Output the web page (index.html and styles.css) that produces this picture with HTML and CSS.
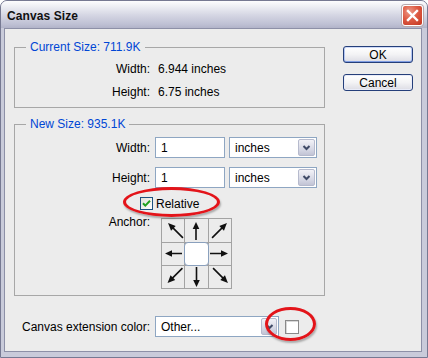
FILE: index.html
```html
<!DOCTYPE html>
<html>
<head>
<meta charset="utf-8">
<title>Canvas Size</title>
<link rel="stylesheet" href="styles.css">
</head>
<body>
<div class="window">
  <div class="titlebar">
    <span class="title">Canvas Size</span>
    <span class="close"><svg width="13" height="13" viewBox="0 0 13 13"><path d="M2 2 L11 11 M11 2 L2 11" stroke="#fff" stroke-width="2.4" stroke-linecap="square"/></svg></span>
  </div>
  <div class="client">
    <div class="main">
      <div class="groups">
        <fieldset class="group current">
          <legend>Current Size: 711.9K</legend>
          <div class="row"><span class="lbl">Width:</span><span class="val">6.944 inches</span></div>
          <div class="row"><span class="lbl">Height:</span><span class="val">6.75 inches</span></div>
        </fieldset>
        <fieldset class="group newsize">
          <legend>New Size: 935.1K</legend>
          <div class="frow">
            <span class="lbl">Width:</span>
            <span class="input">1</span>
            <span class="select unit"><span class="stext">inches</span><span class="dbtn"><svg width="11" height="11" viewBox="0 0 11 11"><path d="M2.5 4 L5.5 7 L8.5 4" fill="none" stroke="#3f4a66" stroke-width="2"/></svg></span></span>
          </div>
          <div class="frow second">
            <span class="lbl">Height:</span>
            <span class="input">1</span>
            <span class="select unit"><span class="stext">inches</span><span class="dbtn"><svg width="11" height="11" viewBox="0 0 11 11"><path d="M2.5 4 L5.5 7 L8.5 4" fill="none" stroke="#3f4a66" stroke-width="2"/></svg></span></span>
          </div>
          <div class="relrow">
            <span class="check"><svg width="11" height="11" viewBox="0 0 11 11"><path d="M2 5.2 L4.3 7.6 L9 2.8" fill="none" stroke="#21a121" stroke-width="2"/></svg></span>
            <span class="reltext">Relative</span>
          </div>
          <div class="anchorrow">
            <span class="lbl anchorlbl">Anchor:</span>
            <div class="grid">
              <div class="cell"><svg viewBox="0 0 22 23"><g transform="translate(13.5 11.5) rotate(-45)"><line x1="0" y1="10.5" x2="0" y2="-4" stroke="#111" stroke-width="1.6"/><polygon points="0,-10.5 -3.3,-3 3.3,-3" fill="#111"/></g></svg></div>
              <div class="cell"><svg viewBox="0 0 23 23"><g transform="translate(11 12) rotate(0)"><line x1="0" y1="9" x2="0" y2="-3" stroke="#111" stroke-width="1.6"/><polygon points="0,-9 -3.3,-2 3.3,-2" fill="#111"/></g></svg></div>
              <div class="cell"><svg viewBox="0 0 22 23"><g transform="translate(10.5 11.5) rotate(45)"><line x1="0" y1="10.5" x2="0" y2="-4" stroke="#111" stroke-width="1.6"/><polygon points="0,-10.5 -3.3,-3 3.3,-3" fill="#111"/></g></svg></div>
              <div class="cell"><svg viewBox="0 0 22 22"><g transform="translate(11.5 10.5) rotate(-90)"><line x1="0" y1="8.5" x2="0" y2="-3" stroke="#111" stroke-width="1.6"/><polygon points="0,-8.5 -3.3,-1.5 3.3,-1.5" fill="#111"/></g></svg></div>
              <div class="cell center"></div>
              <div class="cell"><svg viewBox="0 0 22 22"><g transform="translate(10 10.5) rotate(90)"><line x1="0" y1="9" x2="0" y2="-3" stroke="#111" stroke-width="1.6"/><polygon points="0,-9 -3.3,-2 3.3,-2" fill="#111"/></g></svg></div>
              <div class="cell"><svg viewBox="0 0 22 22"><g transform="translate(13 9.5) rotate(-135)"><line x1="0" y1="10.5" x2="0" y2="-4" stroke="#111" stroke-width="1.6"/><polygon points="0,-10.5 -3.3,-3 3.3,-3" fill="#111"/></g></svg></div>
              <div class="cell"><svg viewBox="0 0 23 22"><g transform="translate(11.5 11) rotate(180)"><line x1="0" y1="10" x2="0" y2="-3" stroke="#111" stroke-width="1.6"/><polygon points="0,-10 -3.3,-3 3.3,-3" fill="#111"/></g></svg></div>
              <div class="cell"><svg viewBox="0 0 22 22"><g transform="translate(11.5 9.5) rotate(135)"><line x1="0" y1="10.5" x2="0" y2="-4" stroke="#111" stroke-width="1.6"/><polygon points="0,-10.5 -3.3,-3 3.3,-3" fill="#111"/></g></svg></div>
            </div>
          </div>
        </fieldset>
      </div>
      <div class="buttons">
        <span class="btn default">OK</span>
        <span class="btn">Cancel</span>
      </div>
    </div>
    <div class="ext">
      <span class="extlbl">Canvas extension color:</span>
      <span class="select other"><span class="stext">Other...</span><span class="dbtn"><svg width="11" height="11" viewBox="0 0 11 11"><path d="M2.5 4 L5.5 7 L8.5 4" fill="none" stroke="#3f4a66" stroke-width="2"/></svg></span></span>
      <span class="swatch"></span>
    </div>
  </div>
  <div class="ellipse e1"></div>
  <div class="ellipse e2"></div>
</div>
</body>
</html>
```

FILE: styles.css
```css
* { box-sizing: border-box; }
html, body { margin: 0; padding: 0; background: #fff; }
body {
  font-family: "Liberation Sans", Arial, sans-serif;
  font-size: 12px;
  color: #000;
}
.window {
  position: relative;
  width: 428px;
  height: 358px;
  border: 1px solid #767992;
  border-radius: 7px 7px 0 0;
  background: #c9cbda;
  display: flex;
  flex-direction: column;
  overflow: hidden;
}
.titlebar {
  height: 27px;
  flex: none;
  display: flex;
  align-items: center;
  justify-content: space-between;
  padding: 2px 4px 0 6px;
  background: linear-gradient(#fdfdfe 0%, #ecedf3 22%, #d3d4e2 55%, #bfc1d4 85%, #b2b4c9 100%);
}
.title {
  font-weight: bold;
  font-size: 12px;
  color: #111;
  letter-spacing: 0.1px;
}
.close {
  width: 21px;
  height: 21px;
  border: 1px solid #fff;
  border-radius: 3px;
  background: radial-gradient(circle at 35% 30%, #ec9a88 0%, #de5b44 45%, #c2351f 100%);
  display: flex;
  align-items: center;
  justify-content: center;
  box-shadow: 0 0 0 1px #b8a9ad;
}
.close svg { display: block; }
.client {
  flex: 1;
  margin: 0 5px 5px 3px;
  border: 1px solid #8d90a7;
  background: #ececec;
  padding: 11px 0 0 9px;
}
.main {
  display: flex;
  align-items: flex-start;
}
.groups {
  width: 311px;
  display: flex;
  flex-direction: column;
}
.group {
  margin: 0;
  padding: 3px 0 4px 0;
  border: 1px solid #a7a7a7;
  min-inline-size: 0;
}
.group legend {
  margin-left: 11px;
  padding: 0 4px;
  color: #0046d5;
  line-height: 14px;
  font-size: 12px;
}
.row {
  height: 23px;
  display: flex;
  align-items: center;
}
.lbl {
  width: 135px;
  text-align: right;
  flex: none;
}
.val { margin-left: 8px; }
.newsize {
  margin-top: 9px;
  padding: 6px 0 6px 0;
}
.frow {
  height: 21px;
  display: flex;
  align-items: center;
}
.frow.second { margin-top: 9px; }
.input {
  margin-left: 5px;
  width: 70px;
  height: 21px;
  border: 1px solid #8ea6c2;
  background: #fff;
  padding-left: 5px;
  display: flex;
  align-items: center;
}
.select {
  height: 21px;
  border: 1px solid #8ea6c2;
  background: #fff;
  display: flex;
  align-items: center;
  justify-content: space-between;
  padding: 1px;
}
.select.unit {
  margin-left: 4px;
  width: 88px;
}
.stext { padding-left: 4px; }
.dbtn {
  width: 17px;
  height: 17px;
  border: 1px solid #b6bacd;
  border-radius: 2px;
  background: linear-gradient(#f2f2f7, #d2d4e2 70%, #c2c4d5);
  display: flex;
  align-items: center;
  justify-content: center;
}
.dbtn svg { display: block; }
.relrow {
  margin-top: 9px;
  height: 13px;
  display: flex;
  align-items: center;
}
.check {
  margin-left: 125px;
  width: 13px;
  height: 13px;
  border: 1px solid #1c5180;
  background: linear-gradient(135deg, #e0e0da, #fff);
  display: flex;
  align-items: center;
  justify-content: center;
}
.check svg { display: block; }
.reltext { margin-left: 3px; }
.anchorrow {
  margin-top: 8px;
  display: flex;
  align-items: flex-start;
}
.anchorlbl {
  margin-top: -3px;
  line-height: 14px;
}
.grid {
  margin-left: 11px;
  display: grid;
  grid-template-columns: 22px 23px 22px;
  grid-template-rows: 23px 22px 22px;
  gap: 1px;
  background: #a3a3a3;
  border: 1px solid #a3a3a3;
}
.cell {
  background: #ececec;
  display: flex;
}
.cell svg { width: 100%; height: 100%; display: block; }
.cell.center {
  background: #fff;
  border: 1px solid #8aa0bd;
  border-radius: 4px;
  margin: -1px;
  position: relative;
}
.buttons {
  margin-left: 18px;
  margin-top: 6px;
  display: flex;
  flex-direction: column;
  gap: 11px;
}
.btn {
  width: 70px;
  height: 17px;
  border: 1px solid #253f7a;
  border-radius: 3px;
  background: linear-gradient(#ffffff, #f3f3f5 50%, #dcdce4);
  display: flex;
  align-items: center;
  justify-content: center;
  box-shadow: inset 0 0 0 1px #e9ecf8;
  font-size: 12px;
}
.btn.default {
  box-shadow: inset 0 1px 0 #cfdaf7, inset 0 -1px 0 #7f9de3, inset 1px 0 0 #b4c6f2, inset -1px 0 0 #b4c6f2;
}
.ext {
  margin-top: 20px;
  margin-left: 8px;
  display: flex;
  align-items: center;
}
.extlbl { width: 133px; }
.select.other {
  width: 124px;
  margin-left: 0;
}
.select.other .dbtn { width: 16px; }
.swatch {
  margin-left: 6px;
  width: 14px;
  height: 14px;
  border: 1px solid #8a8a8a;
  background: #fff;
  box-shadow: inset 1px 1px 0 #d8d8d8;
}
.ellipse {
  position: absolute;
  border: 3px solid #e3141a;
  border-radius: 50%;
  box-shadow: 1px 2px 2px rgba(0,0,0,0.28);
}
.e1 { left: 122px; top: 186px; width: 97px; height: 30px; }
.e2 { left: 264px; top: 306px; width: 51px; height: 34px; }
```
